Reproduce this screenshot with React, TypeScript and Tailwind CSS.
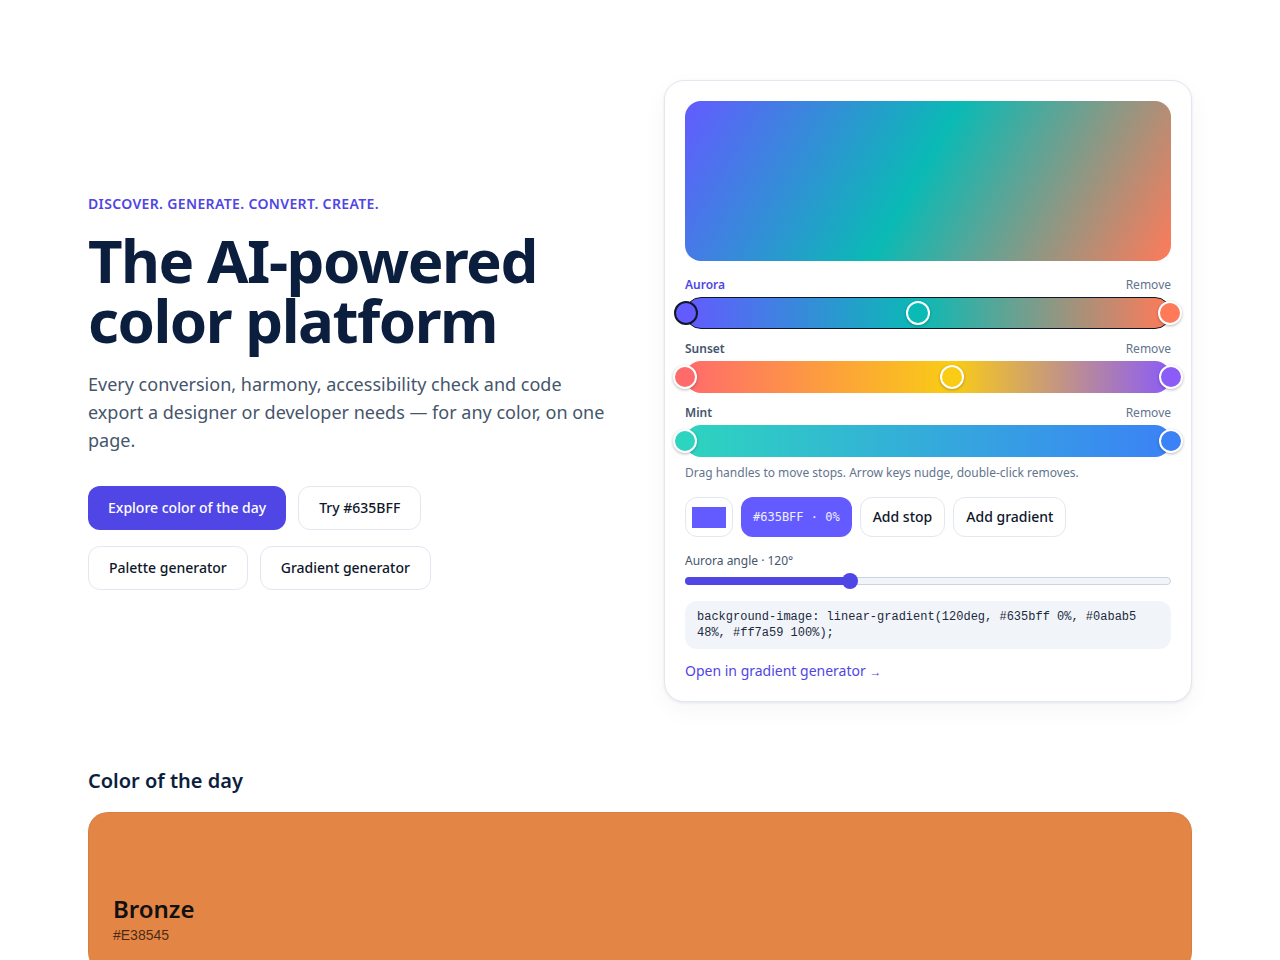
import React from "react";

type Stop = { color: string; pos: number };
type Grad = { name: string; stops: Stop[]; active?: boolean };

const gradients: Grad[] = [
  {
    name: "Aurora",
    active: true,
    stops: [
      { color: "#635bff", pos: 0 },
      { color: "#0abab5", pos: 48 },
      { color: "#ff7a59", pos: 100 },
    ],
  },
  {
    name: "Sunset",
    stops: [
      { color: "#ff6b6b", pos: 0 },
      { color: "#facc15", pos: 55 },
      { color: "#8b5cf6", pos: 100 },
    ],
  },
  {
    name: "Mint",
    stops: [
      { color: "#2dd4bf", pos: 0 },
      { color: "#3b82f6", pos: 100 },
    ],
  },
];

function trackBg(stops: Stop[]) {
  return `linear-gradient(90deg, ${stops.map((s) => `${s.color} ${s.pos}%`).join(", ")})`;
}

function GradientRow({ g }: { g: Grad }) {
  return (
    <div>
      <div className="flex items-center justify-between text-xs leading-4">
        <span className={g.active ? "font-semibold text-[#4f46e5]" : "font-semibold text-slate-600"}>{g.name}</span>
        <button className="text-slate-500">Remove</button>
      </div>
      <div
        className={`relative mt-1 h-8 rounded-full ${g.active ? "border border-[#0f172a]" : ""}`}
        style={{ backgroundImage: trackBg(g.stops) }}
      >
        {g.stops.map((s, i) => {
          const selected = g.active && i === 0;
          return (
            <span
              key={i}
              className={`absolute top-1/2 h-6 w-6 -translate-x-1/2 -translate-y-1/2 rounded-full border-2 ${
                selected ? "border-[#0f172a]" : "border-white shadow-[0_1px_3px_rgba(15,23,42,0.3)]"
              }`}
              style={{ left: `${s.pos}%`, backgroundColor: s.color }}
            />
          );
        })}
      </div>
    </div>
  );
}

export default function App() {
  const angle = 120;
  const frac = angle / 360;
  return (
    <div className="min-h-screen bg-white text-slate-900" style={{ fontFamily: '"Noto Sans", sans-serif' }}>
      <div className="mx-auto max-w-6xl px-6">
        <section className="grid grid-cols-2 items-center gap-12 pt-20 pb-[65px]">
          <div className="pt-[2px]">
            <p className="text-sm font-semibold uppercase tracking-wide text-[#4f46e5]">
              Discover. Generate. Convert. Create.
            </p>
            <h1 className="mt-4 text-6xl leading-none font-bold tracking-tight text-[#0c1e3e]">
              <span className="block">The AI-powered</span>
              <span className="block">color platform</span>
            </h1>
            <p className="mt-5 text-lg leading-7 text-slate-600">
              Every conversion, harmony, accessibility check and code export a designer or developer needs — for any
              color, on one page.
            </p>
            <div className="mt-8 flex gap-3">
              <button className="h-11 rounded-xl bg-[#4f46e5] px-5 text-sm font-medium text-white">
                Explore color of the day
              </button>
              <button className="h-11 rounded-xl border border-slate-200 bg-white px-5 text-sm font-medium text-slate-900">
                Try #635BFF
              </button>
            </div>
            <div className="mt-4 flex gap-3">
              <button className="h-11 rounded-xl border border-slate-200 bg-white px-5 text-sm font-medium text-slate-900">
                Palette generator
              </button>
              <button className="h-11 rounded-xl border border-slate-200 bg-white px-5 text-sm font-medium text-slate-900">
                Gradient generator
              </button>
            </div>
          </div>

          <div className="rounded-[20px] border border-slate-200 bg-white p-5 shadow-[0_1px_3px_rgba(15,23,42,0.08),0_8px_24px_rgba(15,23,42,0.04)]">
            <div
              className="h-40 rounded-2xl"
              style={{ backgroundImage: "linear-gradient(120deg, #635bff 0%, #0abab5 48%, #ff7a59 100%)" }}
            />
            <div className="mt-4 flex flex-col gap-3">
              {gradients.map((g) => (
                <GradientRow key={g.name} g={g} />
              ))}
            </div>
            <p className="mt-2 text-xs leading-4 text-slate-500">
              Drag handles to move stops. Arrow keys nudge, double-click removes.
            </p>
            <div className="mt-4 flex items-center gap-2">
              <button className="flex h-10 w-12 items-center justify-center rounded-xl border border-slate-200 bg-white">
                <span className="h-[21px] w-[34px] bg-[#635bff]" />
              </button>
              <button
                className="h-10 rounded-xl bg-[#635bff] px-3 text-xs text-white/90"
                style={{ fontFamily: '"DejaVu Sans Mono", monospace' }}
              >
                #635BFF · 0%
              </button>
              <button className="h-10 rounded-xl border border-slate-200 bg-white px-3 text-sm font-medium text-slate-900">
                Add stop
              </button>
              <button className="h-10 rounded-xl border border-slate-200 bg-white px-3 text-sm font-medium text-slate-900">
                Add gradient
              </button>
            </div>
            <p className="mt-4 text-xs leading-4 text-slate-600">Aurora angle · {angle}°</p>
            <div className="relative mt-1 h-4">
              <div className="absolute inset-x-0 top-1/2 h-2 -translate-y-1/2 rounded-full border border-slate-300 bg-slate-100" />
              <div
                className="absolute left-0 top-1/2 h-2 -translate-y-1/2 rounded-full bg-[#4f46e5]"
                style={{ width: `calc(8px + (100% - 16px) * ${frac})` }}
              />
              <div
                className="absolute top-0 h-4 w-4 -translate-x-1/2 rounded-full bg-[#4f46e5]"
                style={{ left: `calc(8px + (100% - 16px) * ${frac})` }}
              />
            </div>
            <pre
              className="mt-3 whitespace-pre-wrap rounded-xl bg-[#f1f5f9] px-3 py-2 text-xs leading-4 text-slate-800"
              style={{ fontFamily: '"Liberation Mono", monospace' }}
            >
              background-image: linear-gradient(120deg, #635bff 0%, #0abab5 48%, #ff7a59 100%);
            </pre>
            <a className="mt-3 block text-sm leading-5 text-[#4f46e5]" href="#">
              Open in gradient generator <span className="text-xs">→</span>
            </a>
          </div>
        </section>

        <section>
          <h2 className="text-xl leading-7 font-semibold text-[#0c1e3e]">Color of the day</h2>
          <div className="mt-[17px] flex h-40 flex-col justify-end rounded-[20px] border border-black/5 bg-[#e38545] px-6 pt-6 pb-[26px]">
            <div className="text-2xl leading-8 font-semibold text-[#111]">Bronze</div>
            <div className="text-sm leading-5 text-black/70" style={{ fontFamily: '"Liberation Sans", sans-serif' }}>
              #E38545
            </div>
          </div>
        </section>
      </div>
    </div>
  );
}
